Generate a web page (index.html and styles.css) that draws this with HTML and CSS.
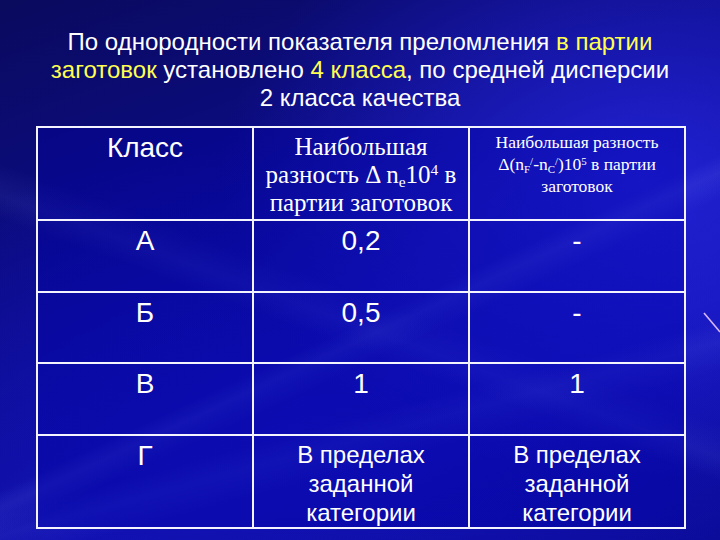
FILE: index.html
```html
<!DOCTYPE html>
<html lang="ru">
<head>
<meta charset="utf-8">
<title>Классы однородности</title>
<link rel="stylesheet" href="styles.css">
</head>
<body>
<div class="slide">
  <div class="streaks"></div>
  <svg class="spark" width="20" height="24" viewBox="0 0 20 24"><line x1="2" y1="2" x2="18" y2="21" stroke="#d8b8ff" stroke-width="1.6"/></svg>
  <h1 class="title">По однородности показателя преломления <span class="hl">в партии</span><br><span class="hl">заготовок</span> установлено <span class="hl">4 класса</span>, по средней дисперсии<br>2 класса качества</h1>
  <table class="grid">
    <tr class="r-head">
      <td class="sans">Класс</td>
      <td class="serif big">Наибольшая разность Δ n<sub>e</sub>10<sup>4</sup> в партии заготовок</td>
      <td class="serif small">Наибольшая разность Δ(n<sub>F</sub><sup>/</sup>-n<sub>C</sub><sup>/</sup>)10<sup>5</sup> в партии заготовок</td>
    </tr>
    <tr class="r-a">
      <td class="sans">А</td>
      <td class="sans">0,2</td>
      <td class="sans">-</td>
    </tr>
    <tr class="r-b">
      <td class="sans">Б</td>
      <td class="sans">0,5</td>
      <td class="sans">-</td>
    </tr>
    <tr class="r-c">
      <td class="sans">В</td>
      <td class="sans">1</td>
      <td class="sans">1</td>
    </tr>
    <tr class="r-d">
      <td class="sans">Г</td>
      <td class="sans multi">В пределах заданной категории</td>
      <td class="sans multi">В пределах заданной категории</td>
    </tr>
  </table>
</div>
</body>
</html>
```
FILE: styles.css
```css
html, body {
  margin: 0;
  padding: 0;
}
body {
  width: 720px;
  height: 540px;
  overflow: hidden;
  background: #0a0a80;
}
.slide {
  position: relative;
  width: 720px;
  height: 540px;
  overflow: hidden;
  background:
    radial-gradient(ellipse 420px 300px at 640px 180px, rgba(40,40,230,0.75), rgba(40,40,230,0) 100%),
    radial-gradient(ellipse 500px 260px at 300px 400px, rgba(20,20,190,0.6), rgba(20,20,190,0) 100%),
    linear-gradient(160deg, #0a0a5e 0%, #0c0c8c 40%, #1111b0 70%, #0c0c9a 100%);
  color: #ffffff;
  font-family: "Liberation Sans", Arial, sans-serif;
}
.streaks {
  position: absolute;
  inset: 0;
  background:
    linear-gradient(155deg, rgba(255,255,255,0) 56%, rgba(140,160,255,0.10) 58%, rgba(255,255,255,0) 61%),
    linear-gradient(20deg, rgba(255,255,255,0) 40%, rgba(140,160,255,0.08) 43%, rgba(255,255,255,0) 47%),
    linear-gradient(165deg, rgba(255,255,255,0) 70%, rgba(140,160,255,0.08) 73%, rgba(255,255,255,0) 77%);
  pointer-events: none;
}
.spark {
  position: absolute;
  left: 702px;
  top: 311px;
}
.title {
  position: relative;
  margin: 0;
  padding: 28px 0 0;
  font-weight: normal;
  font-size: 24px;
  line-height: 28px;
  text-align: center;
}
.hl {
  color: #ffff50;
}
.grid {
  position: relative;
  margin: 14px 0 0 36px;
  width: 650px;
  border-collapse: collapse;
  table-layout: fixed;
}
.grid td {
  border: 2px solid #f4f4ff;
  vertical-align: top;
  text-align: center;
  padding: 4px 6px 0;
  background: rgba(0,0,170,0.35);
}
.r-head td { height: 86px; }
.r-a td { height: 66px; }
.r-b td { height: 65px; }
.r-c td { height: 66px; }
.r-d td { height: 87px; }
.sans {
  font-family: "Liberation Sans", Arial, sans-serif;
  font-size: 28px;
  line-height: 32px;
}
.serif {
  font-family: "Liberation Serif", "Times New Roman", serif;
}
.big {
  font-size: 25px;
  line-height: 28px;
  padding-top: 5px !important;
}
.small {
  font-size: 17.5px;
  line-height: 22px;
  padding-top: 3px !important;
}
.multi {
  font-size: 24px;
  line-height: 29px;
}
sub, sup {
  font-size: 62%;
  line-height: 0;
  position: relative;
  vertical-align: baseline;
}
sup { top: -0.5em; }
sub { top: 0.25em; }
```
